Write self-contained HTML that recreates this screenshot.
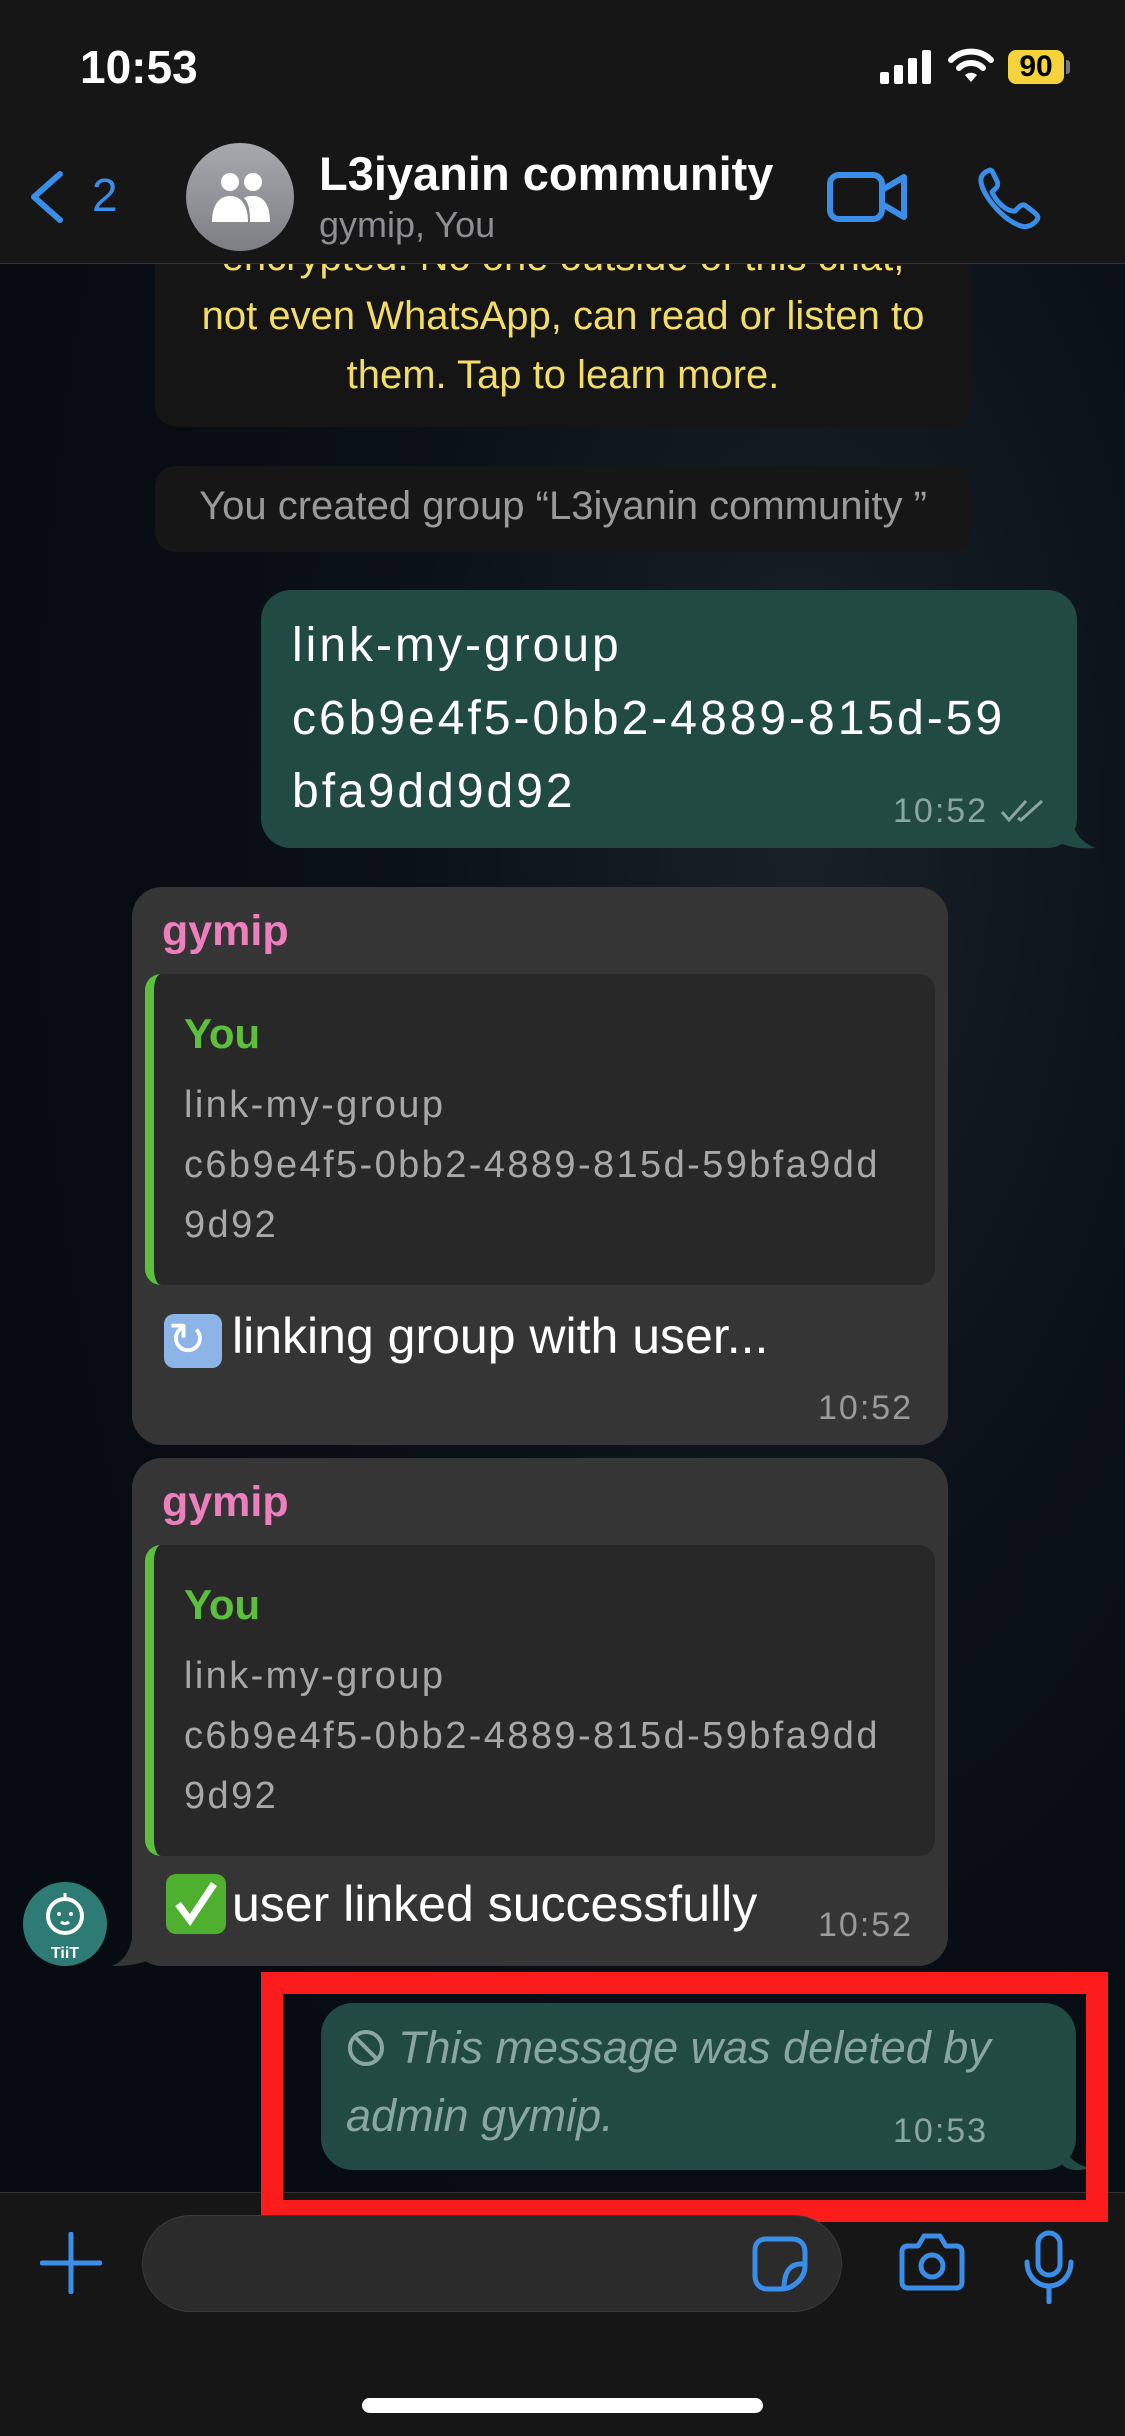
<!DOCTYPE html>
<html><head><meta charset="utf-8"><style>
*{margin:0;padding:0;box-sizing:border-box}
body{width:1125px;height:2436px;overflow:hidden;background:#070c14;font-family:"Liberation Sans",sans-serif;position:relative;color:#fff}
.a{position:absolute}
.bg{left:0;top:0;width:1125px;height:2436px;background:radial-gradient(ellipse at 800px 820px,#1a2028 0,#0b1119 35%,#070b12 70%)}
.t{white-space:nowrap}
.hd{z-index:5}
</style></head><body>
<div class="a bg"></div>
<div class="a" style="left:155px;top:200px;width:816px;height:227px;background:#151515;border-radius:0 0 22px 22px"></div>
<div class="a t" style="left:155px;top:228px;width:816px;text-align:center;font-size:40px;color:#f3dd6a;line-height:59px">encrypted. No one outside of this chat,<br>not even WhatsApp, can read or listen to<br>them. Tap to learn more.</div>
<div class="a hd" style="left:0;top:0;width:1125px;height:264px;background:#161616;border-bottom:1px solid #333"></div>
<div class="a t hd" style="left:80px;top:40px;font-size:46px;font-weight:bold">10:53</div>
<svg class="a hd" style="left:880px;top:50px" width="56" height="34"><rect x="0" y="22" width="9" height="12" rx="2" fill="#fff"/><rect x="14" y="15" width="9" height="19" rx="2" fill="#fff"/><rect x="28" y="8" width="9" height="26" rx="2" fill="#fff"/><rect x="42" y="0" width="9" height="34" rx="2" fill="#fff"/></svg>
<svg class="a hd" style="left:948px;top:48px" width="46" height="36" viewBox="0 0 46 36"><path d="M3 12a28 28 0 0 1 40 0" stroke="#fff" stroke-width="6" fill="none" stroke-linecap="round"/><path d="M11 20a17 17 0 0 1 24 0" stroke="#fff" stroke-width="6" fill="none" stroke-linecap="round"/><path d="M17 27l6 7 6-7a9 9 0 0 0-12 0z" fill="#fff"/></svg>
<div class="a hd" style="left:1008px;top:50px;width:56px;height:34px;background:#f5d33c;border-radius:8px;color:#000;font-weight:bold;font-size:30px;text-align:center;line-height:34px">90</div>
<div class="a hd" style="left:1066px;top:60px;width:4px;height:14px;background:#777;border-radius:0 3px 3px 0"></div>
<svg class="a hd" style="left:26px;top:170px" width="40" height="54"><path d="M34 4L8 27l26 23" stroke="#3a8ee8" stroke-width="6" fill="none" stroke-linecap="round" stroke-linejoin="round"/></svg>
<div class="a t hd" style="left:92px;top:168px;font-size:46px;color:#3a8ee8">2</div>
<div class="a hd" style="left:186px;top:143px;width:108px;height:108px;border-radius:50%;background:linear-gradient(#a8a9ae,#7d7e84)"></div>
<svg class="a hd" style="left:206px;top:168px" width="70" height="60"><circle cx="24" cy="14" r="9" fill="#fff"/><circle cx="47" cy="14" r="9" fill="#fff"/><path d="M6 54c0-18 8-26 18-26s18 8 18 26z" fill="#fff"/><path d="M44 54c0-14-2-20-6-24 3-2 6-2 9-2 10 0 17 8 17 26z" fill="#fff"/></svg>
<div class="a t hd" style="left:319px;top:146px;font-size:47px;font-weight:bold">L3iyanin community</div>
<div class="a t hd" style="left:319px;top:204px;font-size:36px;color:#8e8e93">gymip, You</div>
<svg class="a hd" style="left:826px;top:170px" width="84" height="54"><rect x="4" y="5" width="52" height="44" rx="9" stroke="#3a8ee8" stroke-width="6" fill="none"/><path d="M56 20l22-13v40L56 34" stroke="#3a8ee8" stroke-width="6" fill="none" stroke-linejoin="round"/></svg>
<svg class="a hd" style="left:976px;top:166px" width="68" height="64" viewBox="0 0 68 64"><path d="M14 4c-6 2-10 6-9 12 2 14 22 38 40 44 6 2 12-1 16-6 2-3 0-5-2-7l-9-7c-2-2-5-1-7 1l-4 4C30 46 20 35 16 26l4-4c2-2 2-5 1-7l-5-10c-1-1-2-1-2-1z" stroke="#3a8ee8" stroke-width="5" fill="none" stroke-linejoin="round"/></svg>

<div class="a" style="left:155px;top:466px;width:816px;height:86px;background:#161616;border-radius:20px"></div>
<div class="a t" style="left:155px;top:484px;width:816px;text-align:center;font-size:40px;color:#9a9a9a">You created group “L3iyanin community ”</div>
<div class="a" style="left:261px;top:590px;width:816px;height:258px;background:#204a42;border-radius:30px"></div>
<svg class="a" style="left:1050px;top:810px" width="45" height="40"><path d="M0 0h20c2 20 8 30 25 38-20 2-35-4-45-10z" fill="#204a42"/></svg>
<div class="a t" style="left:292px;top:609px;font-size:48px;line-height:73px;letter-spacing:3px">link-my-group<br>c6b9e4f5-0bb2-4889-815d-59<br>bfa9dd9d92</div>
<div class="a t" style="left:893px;top:792px;font-size:34px;color:#8aa6a0;letter-spacing:2px">10:52</div>
<svg class="a" style="left:1000px;top:798px" width="48" height="26"><path d="M2 14l7 8L26 3M18 20l3 2L42 3" stroke="#8aa6a0" stroke-width="3" fill="none"/></svg>
<div class="a" style="left:132px;top:887px;width:816px;height:558px;background:#353535;border-radius:30px"></div>
<div class="a t" style="left:162px;top:907px;font-size:43px;font-weight:bold;color:#ee7fbe">gymip</div>
<div class="a" style="left:145px;top:974px;width:790px;height:311px;background:#282828;border-radius:16px;border-left:9px solid #5dc03d"></div>
<div class="a t" style="left:184px;top:1010px;font-size:42px;font-weight:bold;color:#5dc03d">You</div>
<div class="a t" style="left:184px;top:1075px;font-size:38px;color:#a8a8a8;line-height:60px;letter-spacing:2.4px">link-my-group<br>c6b9e4f5-0bb2-4889-815d-59bfa9dd<br>9d92</div>
<div class="a" style="left:164px;top:1314px;width:58px;height:54px;background:#8db4e6;border-radius:10px"></div>
<div class="a t" style="left:168px;top:1312px;font-size:46px;color:#fff">↻</div>
<div class="a t" style="left:232px;top:1307px;font-size:50px">linking group with user...</div>
<div class="a t" style="left:818px;top:1389px;font-size:34px;color:#9a9a9a;letter-spacing:2px">10:52</div>
<div class="a" style="left:132px;top:1458px;width:816px;height:508px;background:#353535;border-radius:30px"></div>
<svg class="a" style="left:112px;top:1925px" width="45" height="42"><path d="M45 0v30c-10 8-25 11-45 11 14-6 20-18 22-41z" fill="#353535"/></svg>
<div class="a t" style="left:162px;top:1478px;font-size:43px;font-weight:bold;color:#ee7fbe">gymip</div>
<div class="a" style="left:145px;top:1545px;width:790px;height:311px;background:#282828;border-radius:16px;border-left:9px solid #5dc03d"></div>
<div class="a t" style="left:184px;top:1581px;font-size:42px;font-weight:bold;color:#5dc03d">You</div>
<div class="a t" style="left:184px;top:1646px;font-size:38px;color:#a8a8a8;line-height:60px;letter-spacing:2.4px">link-my-group<br>c6b9e4f5-0bb2-4889-815d-59bfa9dd<br>9d92</div>
<div class="a" style="left:166px;top:1874px;width:60px;height:60px;background:#4fb030;border-radius:10px"></div>
<svg class="a" style="left:172px;top:1880px" width="48" height="48"><path d="M6 24l12 16L42 4" stroke="#fff" stroke-width="7" fill="none"/></svg>
<div class="a t" style="left:232px;top:1875px;font-size:50px">user linked successfully</div>
<div class="a t" style="left:818px;top:1906px;font-size:34px;color:#9a9a9a;letter-spacing:2px">10:52</div>
<div class="a" style="left:23px;top:1882px;width:84px;height:84px;border-radius:50%;background:#2e7a74"></div>
<svg class="a" style="left:23px;top:1882px" width="84" height="84"><circle cx="42" cy="34" r="17" stroke="#fff" stroke-width="4" fill="none"/><circle cx="36" cy="32" r="2" fill="#fff"/><circle cx="48" cy="32" r="2" fill="#fff"/><path d="M38 40q4 3 8 0M42 17v-6" stroke="#fff" stroke-width="3" fill="none"/><text x="42" y="76" text-anchor="middle" font-size="16" font-weight="bold" fill="#fff" font-family="Liberation Sans">TiiT</text></svg>
<div class="a" style="left:321px;top:2003px;width:755px;height:167px;background:#204a42;border-radius:32px"></div>
<svg class="a" style="left:1062px;top:2140px" width="30" height="32"><path d="M0 0c4 16 12 24 28 28-14 4-24 2-28-4z" fill="#204a42"/></svg>
<svg class="a" style="left:346px;top:2028px" width="40" height="40"><circle cx="20" cy="20" r="16" stroke="#8aa6a0" stroke-width="4" fill="none"/><path d="M9 9l22 22" stroke="#8aa6a0" stroke-width="4"/></svg>
<div class="a t" style="left:346px;top:2014px;font-size:45px;font-style:italic;color:#8aa6a0;line-height:68px;text-indent:52px">This message was deleted by<br><span style="display:inline-block;text-indent:0">admin gymip.</span></div>
<div class="a t" style="left:893px;top:2112px;font-size:34px;color:#8aa6a0;letter-spacing:2px">10:53</div>
<div class="a" style="left:0;top:2192px;width:1125px;height:244px;background:#161616;border-top:1px solid #333"></div>
<div class="a" style="left:261px;top:1972px;width:847px;height:250px;border:22px solid #fc1c1c"></div>
<svg class="a" style="left:40px;top:2232px" width="62" height="62"><path d="M31 2v58M2 31h58" stroke="#3a8ee8" stroke-width="5" stroke-linecap="round"/></svg>
<div class="a" style="left:142px;top:2215px;width:700px;height:97px;background:#2b2b2b;border-radius:49px;border:1px solid #3a3a3a"></div>
<svg class="a" style="left:752px;top:2236px" width="56" height="56"><path d="M14 3h26c8 0 13 5 13 13v14c0 13-13 23-23 23H16C8 53 3 48 3 40V14C3 7 8 3 14 3z" stroke="#3a8ee8" stroke-width="5" fill="none"/><path d="M52 28c-12-1-20 5-20 25" stroke="#3a8ee8" stroke-width="5" fill="none"/></svg>
<svg class="a" style="left:898px;top:2232px" width="68" height="60"><path d="M10 14h10l6-10h16l6 10h10c4 0 6 2 6 6v30c0 4-2 6-6 6H10c-4 0-6-2-6-6V20c0-4 2-6 6-6z" stroke="#3a8ee8" stroke-width="5" fill="none" stroke-linejoin="round"/><circle cx="34" cy="34" r="11" stroke="#3a8ee8" stroke-width="5" fill="none"/></svg>
<svg class="a" style="left:1022px;top:2230px" width="54" height="74"><rect x="16" y="3" width="22" height="42" rx="11" stroke="#3a8ee8" stroke-width="5" fill="none"/><path d="M5 32c0 14 10 24 22 24s22-10 22-24M27 56v16" stroke="#3a8ee8" stroke-width="5" fill="none" stroke-linecap="round"/></svg>
<div class="a" style="left:362px;top:2398px;width:401px;height:15px;background:#fff;border-radius:8px"></div>
</body></html>
